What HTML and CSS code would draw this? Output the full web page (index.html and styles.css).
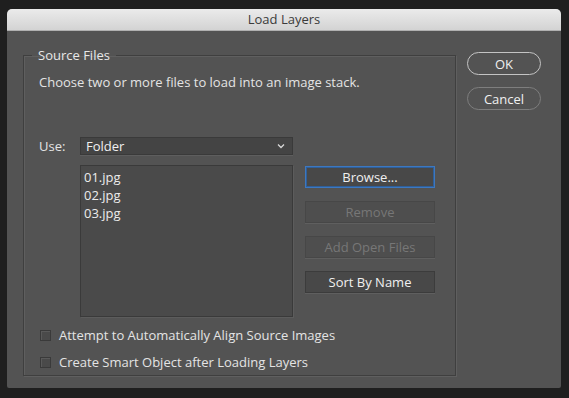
FILE: index.html
```html
<!DOCTYPE html>
<html lang="en">
<head>
    <meta charset="UTF-8">
    <title>Load Layers</title>
    <link rel="stylesheet" href="styles.css">
</head>
<body>
    <div class="dialog">
        <div class="titlebar">Load Layers</div>

        <div class="dialog-body">
            <fieldset class="source">
                <legend>Source Files</legend>
                <p class="hint">Choose two or more files to load into an image stack.</p>

                <div class="use-row">
                    <span class="use-label">Use:</span>
                    <div class="select">
                        <span>Folder</span>
                        <svg class="chevron" width="8" height="6" viewBox="0 0 8 6">
                            <path d="M1 1.5 L4 4.5 L7 1.5" fill="none" stroke="#d8d8d8" stroke-width="1.3"/>
                        </svg>
                    </div>
                </div>

                <div class="files-row">
                    <ul class="file-list">
                        <li>01.jpg</li>
                        <li>02.jpg</li>
                        <li>03.jpg</li>
                    </ul>
                    <div class="file-buttons">
                        <button class="btn focused">Browse...</button>
                        <button class="btn" disabled>Remove</button>
                        <button class="btn" disabled>Add Open Files</button>
                        <button class="btn">Sort By Name</button>
                    </div>
                </div>

                <label class="check"><span class="box"></span>Attempt to Automatically Align Source Images</label>
                <label class="check"><span class="box"></span>Create Smart Object after Loading Layers</label>
            </fieldset>

            <div class="actions">
                <button class="pill primary">OK</button>
                <button class="pill">Cancel</button>
            </div>
        </div>
    </div>
</body>
</html>
```

FILE: styles.css
```css
/* General */
* {
    margin: 0;
    padding: 0;
    box-sizing: border-box;
}

body {
    background-color: #1f1f1f;
    font-family: 'Open Sans', 'Liberation Sans', sans-serif;
    font-size: 13px;
    color: #e4e4e4;
    padding: 9px 8px 10px 7px;
}

/* Dialog window */
.dialog {
    width: 554px;
    height: 379px;
    background-color: #535353;
    border-radius: 5px 5px 2px 2px;
    overflow: hidden;
    display: flex;
    flex-direction: column;
}

.titlebar {
    height: 22px;
    background: linear-gradient(#ebebeb, #d3d3d3);
    border-bottom: 1px solid #b0b0b0;
    color: #3a3a3a;
    text-align: center;
    line-height: 21px;
    font-size: 13px;
}

.dialog-body {
    flex: 1;
    display: flex;
    padding: 16px 20px 12px 16px;
    gap: 11px;
}

/* Source files group */
.source {
    width: 435px;
    border: 1px solid #3f3f3f;
    box-shadow: 1px 1px 0 #5f5f5f, inset 1px 1px 0 #5f5f5f;
    padding: 0 0 0 15px;
    display: flex;
    flex-direction: column;
}

.source legend {
    margin-left: -7px;
    padding: 0 6px;
    color: #e8e8e8;
    line-height: 16px;
}

.hint {
    margin-top: 10px;
    line-height: 18px;
}

.use-row {
    display: flex;
    align-items: center;
    margin-top: 46px;
}

.use-label {
    width: 41px;
}

.select {
    width: 213px;
    height: 18px;
    background-color: #444444;
    border: 1px solid #3a3a3a;
    box-shadow: 0 1px 0 #5e5e5e;
    display: flex;
    align-items: center;
    justify-content: space-between;
    padding: 0 7px 0 5px;
    color: #f0f0f0;
}

.files-row {
    display: flex;
    margin: 10px 0 0 41px;
    gap: 12px;
}

.file-list {
    list-style: none;
    width: 213px;
    height: 152px;
    background-color: #4a4a4a;
    border: 1px solid #3a3a3a;
    box-shadow: 1px 1px 0 #5c5c5c;
    padding: 2px 3px;
    color: #ececec;
}

.file-list li {
    line-height: 18px;
}

.file-buttons {
    display: flex;
    flex-direction: column;
    gap: 13px;
    padding-top: 1px;
}

.btn {
    width: 130px;
    height: 22px;
    background-color: #484848;
    border: 1px solid #3c3c3c;
    box-shadow: 0 1px 0 #5f5f5f;
    color: #f0f0f0;
    font-family: inherit;
    font-size: 13px;
}

.btn.focused {
    border: 1px solid #3d78c0;
    box-shadow: inset 0 0 0 1px #2f5f99;
}

.btn:disabled {
    background-color: #4e4e4e;
    border-color: #474747;
    color: #777777;
}

.check {
    display: flex;
    align-items: center;
    line-height: 18px;
}

.check:first-of-type {
    margin-top: 9px;
}

.check + .check {
    margin-top: 9px;
}

.box {
    width: 11px;
    height: 11px;
    background-color: #4a4a4a;
    border: 1px solid #3a3a3a;
    box-shadow: inset 1px 1px 0 #5a5a5a;
    margin: 0 8px 0 1px;
}

/* OK / Cancel */
.actions {
    display: flex;
    flex-direction: column;
    gap: 12px;
    padding-top: 5px;
}

.pill {
    width: 74px;
    height: 23px;
    border-radius: 12px;
    background-color: #535353;
    border: 1px solid #7e7e7e;
    color: #f0f0f0;
    font-family: inherit;
    font-size: 13px;
}

.pill.primary {
    border-color: #c4c4c4;
}
```
